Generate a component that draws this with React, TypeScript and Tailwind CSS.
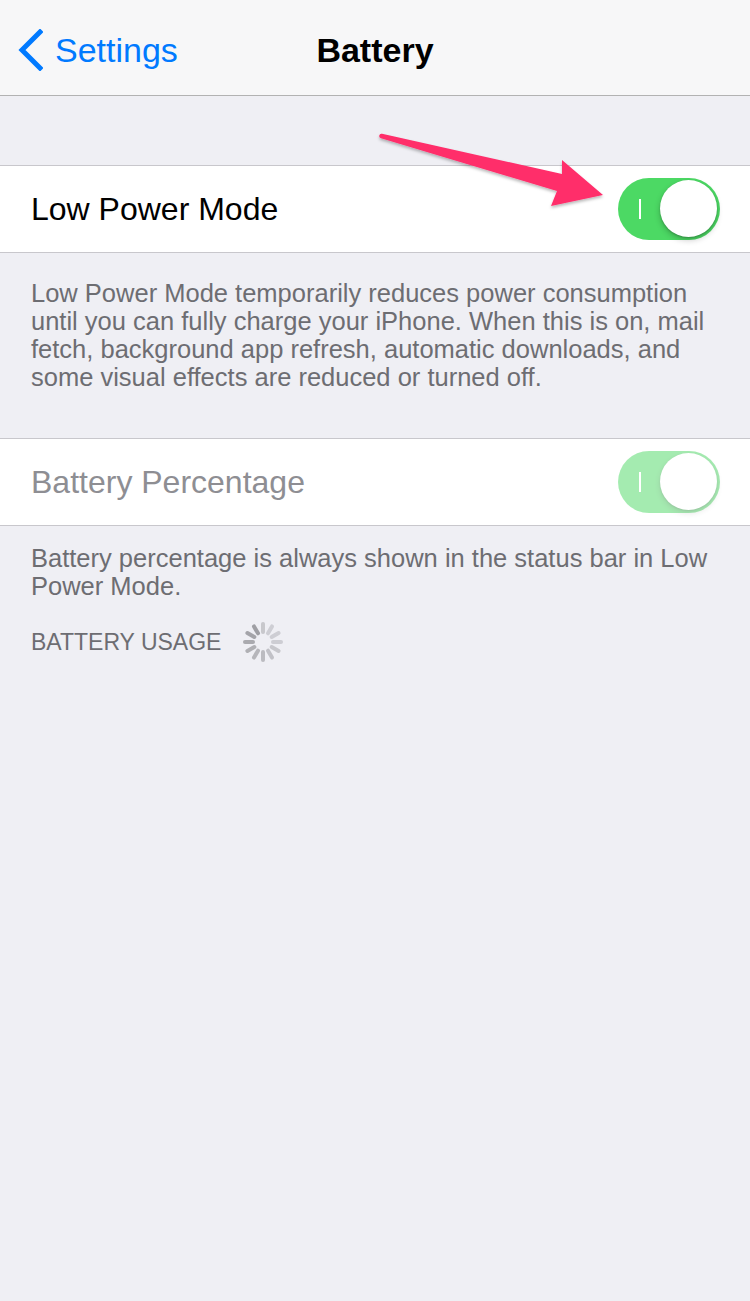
import React from "react";

const FONT = { fontFamily: '"Liberation Sans", Arial, sans-serif' };

function Toggle({ dim = false }: { dim?: boolean }) {
  return (
    <div className={`relative h-[62px] w-[102px] rounded-full bg-[#4cd964] ${dim ? "opacity-50" : ""}`}>
      <div className="absolute left-[21px] top-[21px] h-[20px] w-[2px] bg-white" />
      <div className="absolute right-[3px] top-[2px] h-[57px] w-[57px] rounded-full bg-white shadow-[0_3px_6px_rgba(0,0,0,0.22),0_1px_2px_rgba(0,0,0,0.2)]" />
    </div>
  );
}

function Spinner() {
  const spokes = Array.from({ length: 12 }, (_, i) => i);
  return (
    <svg width="40" height="40" viewBox="-20 -20 40 40">
      {spokes.map((i) => {
        // i = 0 is the leading spoke at eleven o'clock; the rest trail behind it
        const angle = -30 - i * 30;
        const shade = Math.max(0.25, 0.62 - i * 0.045);
        return (
          <line
            key={i}
            x1="0"
            y1="-10"
            x2="0"
            y2="-18"
            stroke="#6d6d72"
            strokeOpacity={i === 11 ? 0.3 : shade}
            strokeWidth="4"
            strokeLinecap="round"
            transform={`rotate(${angle})`}
          />
        );
      })}
    </svg>
  );
}

function Arrow() {
  return (
    <svg
      className="pointer-events-none absolute left-0 top-0"
      width="750"
      height="260"
      viewBox="0 0 750 260"
    >
      <defs>
        <filter id="arrowShadow" x="-10%" y="-30%" width="120%" height="160%">
          <feDropShadow dx="0" dy="2" stdDeviation="1.5" floodColor="#000" floodOpacity="0.28" />
        </filter>
      </defs>
      <g filter="url(#arrowShadow)">
        <path
          d="M382 133.8 L562 174 L562 160 L603 195 L551 206 L557 191 L381 138.2 A2.2 2.2 0 0 1 382 133.8 Z"
          fill="#ff2d6b"
        />
      </g>
    </svg>
  );
}

export default function App() {
  return (
    <div className="relative min-h-[1301px] w-[750px] bg-[#efeff4]" style={FONT}>
      {/* navigation bar */}
      <div className="grid h-[96px] grid-cols-[1fr_auto_1fr] items-center border-b border-[#b2b2b2] bg-[#f7f7f8]">
        <div className="flex items-center pl-[17px] pt-[5px] text-[#007aff]">
          <svg width="26" height="42" viewBox="0 0 26 42" className="mr-[12px]">
            <path d="M23 3 L5 21 L23 39" fill="none" stroke="#007aff" strokeWidth="5" strokeLinecap="square" />
          </svg>
          <span className="text-[34px] leading-none">Settings</span>
        </div>
        <div className="pt-[5px] text-[34px] font-bold leading-none text-black">Battery</div>
        <div />
      </div>

      <div className="h-[69px]" />

      {/* Low Power Mode */}
      <div className="flex h-[88px] items-center justify-between border-y border-[#c8c7cc] bg-white pl-[31px] pr-[30px]">
        <span className="text-[32px] text-black">Low Power Mode</span>
        <Toggle />
      </div>
      <p className="pl-[31px] pr-[24px] pt-[26px] text-[25.5px] leading-[28px] text-[#6d6d72]">
        Low Power Mode temporarily reduces power consumption until you can fully charge your iPhone. When this is on, mail fetch, background app refresh, automatic downloads, and some visual effects are reduced or turned off.
      </p>

      <div className="h-[47px]" />

      {/* Battery Percentage */}
      <div className="flex h-[88px] items-center justify-between border-y border-[#c8c7cc] bg-white pl-[31px] pr-[30px]">
        <span className="text-[32px] text-[#8e8e93]">Battery Percentage</span>
        <Toggle dim />
      </div>
      <p className="pl-[31px] pr-[24px] pt-[18px] text-[25.5px] leading-[28px] text-[#6d6d72]">
        Battery percentage is always shown in the status bar in Low Power Mode.
      </p>

      <div className="flex items-center pl-[31px] pt-[22px]">
        <span className="text-[23px] leading-[28px] text-[#6d6d72]">BATTERY USAGE</span>
        <div className="ml-[22px]">
          <Spinner />
        </div>
      </div>

      <Arrow />
    </div>
  );
}
